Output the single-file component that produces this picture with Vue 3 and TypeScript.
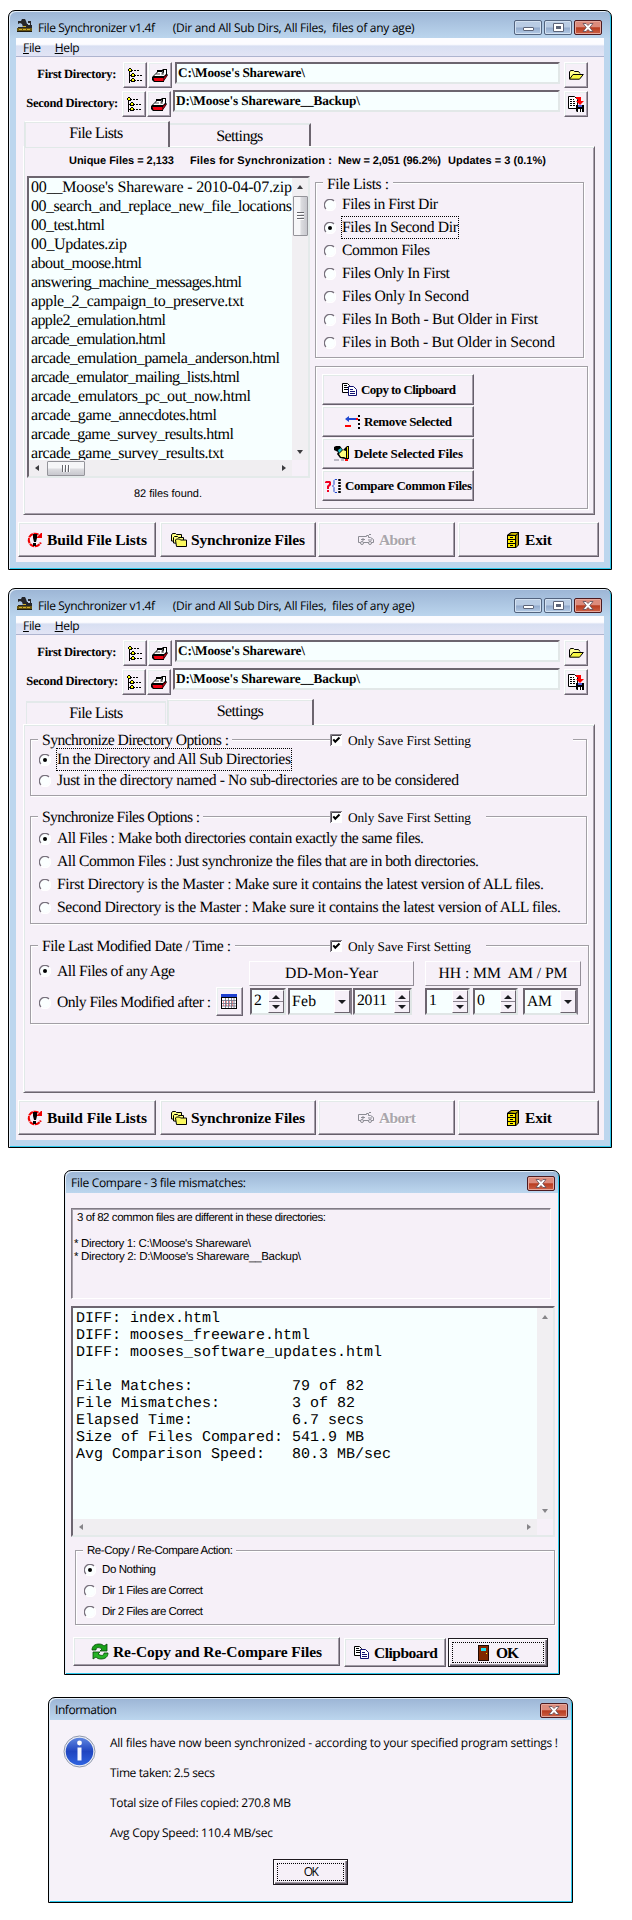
<script setup lang="ts">
import type { Directive } from 'vue'

type Tab = 'lists' | 'settings'
interface Line { text: string; width: number; on?: boolean; focus?: boolean }

/* Tracks a run of text so that it spans the given number of pixels. */
const vFit: Directive<HTMLElement, number> = {
  mounted(el, { value }) {
    const range = document.createRange()
    range.selectNodeContents(el)
    const gaps = (el.textContent ?? '').length - 1
    if (gaps < 1) return
    el.style.letterSpacing = `${((value - range.getBoundingClientRect().width) / gaps).toFixed(3)}px`
  },
}

const windows: Tab[] = ['lists', 'settings']

const stats = [
  { text: 'Unique Files = 2,133', width: 105, cls: 'unique' },
  { text: 'Files for Synchronization :', width: 142, cls: 'sync' },
  { text: 'New = 2,051 (96.2%)', width: 103, cls: 'new' },
  { text: 'Updates = 3 (0.1%)', width: 98, cls: 'updates' },
]

const files: Line[] = [
  { text: "00__Moose's Shareware - 2010-04-07.zip", width: 261 },
  { text: '00_search_and_replace_new_file_locations', width: 261 },
  { text: '00_test.html', width: 74 },
  { text: '00_Updates.zip', width: 96 },
  { text: 'about_moose.html', width: 111 },
  { text: 'answering_machine_messages.html', width: 211 },
  { text: 'apple_2_campaign_to_preserve.txt', width: 213 },
  { text: 'apple2_emulation.html', width: 135 },
  { text: 'arcade_emulation.html', width: 135 },
  { text: 'arcade_emulation_pamela_anderson.html', width: 249 },
  { text: 'arcade_emulator_mailing_lists.html', width: 209 },
  { text: 'arcade_emulators_pc_out_now.html', width: 220 },
  { text: 'arcade_game_annecdotes.html', width: 186 },
  { text: 'arcade_game_survey_results.html', width: 203 },
  { text: 'arcade_game_survey_results.txt', width: 193 },
]

const listChoices: Line[] = [
  { text: 'Files in First Dir', width: 96 },
  { text: 'Files In Second Dir', width: 116, on: true, focus: true },
  { text: 'Common Files', width: 88 },
  { text: 'Files Only In First', width: 108 },
  { text: 'Files Only In Second', width: 127 },
  { text: 'Files In Both - But Older in First', width: 196 },
  { text: 'Files in Both - But Older in Second', width: 213 },
]

const listActions = [
  { icon: 'copy', text: 'Copy to Clipboard', width: 95, cls: 'a-copy' },
  { icon: 'remove', text: 'Remove Selected', width: 88, cls: 'a-remove' },
  { icon: 'delete', text: 'Delete Selected Files', width: 109, cls: 'a-delete' },
  { icon: 'compare', text: 'Compare Common Files', width: 127, cls: 'a-compare' },
]

const mainActions = [
  { icon: 'build', text: 'Build File Lists', width: 100, cls: 'm-build' },
  { icon: 'folders', text: 'Synchronize Files', width: 114, cls: 'm-sync' },
  { icon: 'abort', text: 'Abort', width: 37, cls: 'm-abort' },
  { icon: 'exit', text: 'Exit', width: 27, cls: 'm-exit' },
]

const dirChoices: Line[] = [
  { text: 'In the Directory and All Sub Directories', width: 234, on: true, focus: true },
  { text: 'Just in the directory named - No sub-directories are to be considered', width: 402 },
]

const syncChoices: Line[] = [
  { text: 'All Files : Make both directories contain exactly the same files.', width: 367, on: true },
  { text: 'All Common Files : Just synchronize the files that are in both directories.', width: 422 },
  { text: 'First Directory is the Master : Make sure it contains the latest version of ALL files.', width: 487 },
  { text: 'Second Directory is the Master : Make sure it contains the latest version of ALL files.', width: 504 },
]

const report = `DIFF: index.html
DIFF: mooses_freeware.html
DIFF: mooses_software_updates.html

File Matches:           79 of 82
File Mismatches:        3 of 82
Elapsed Time:           6.7 secs
Size of Files Compared: 541.9 MB
Avg Comparison Speed:   80.3 MB/sec`

const recopyChoices: Line[] = [
  { text: 'Do Nothing', width: 54, on: true },
  { text: 'Dir 1 Files are Correct', width: 101 },
  { text: 'Dir 2 Files are Correct', width: 101 },
]

const infoLines: Line[] = [
  { text: 'All files have now been synchronized - according to your specified program settings !', width: 448 },
  { text: 'Time taken: 2.5 secs', width: 105 },
  { text: 'Total size of Files copied: 270.8 MB', width: 181 },
  { text: 'Avg Copy Speed: 110.4 MB/sec', width: 163 },
]

const treePixels = [
  '.kk............',
  'kYYk...........',
  'kYYkk.kk.kk....',
  '.kkk...........',
  '.k.............',
  '.k..kk.........',
  '.k.kYYk........',
  '.kkkYYkk.kk.kk.',
  '.k.kkkk........',
  '.k.............',
  '.k..kk.........',
  '.k.kYYk........',
  '.kkkYYkk.kk.kk.',
  '.k.kkkk........',
  '.k.............',
]
const treeCells = treePixels.flatMap((row, y) =>
  [...row].map((c, x) => ({ x, y, c })).filter((p) => p.c !== '.'),
)
</script>

<template>
  <div class="page">
    <svg class="defs" width="0" height="0" aria-hidden="true">
      <defs>
        <linearGradient id="blueball" x1="0" y1="0" x2="0" y2="1">
          <stop offset="0" stop-color="#5f86e0" /><stop offset=".5" stop-color="#1f45c0" /><stop offset="1" stop-color="#2f63e0" />
        </linearGradient>
        <symbol id="i-app" viewBox="0 0 16 14">
          <path d="M1 2h3l1-2h3l1 2 1 3h1V2h3v4h1v4H1V8h5L5 5 3 4 1 5z" fill="#26262a" />
          <path d="M11 4h2v2h-2z" fill="#b9c8d8" /><path d="M0 9h15v3l-2 1H3L0 12z" fill="#6a5610" />
          <path d="M2 10h3v1H2zM6 10h3v1H6zM10 10h3v1h-3zM6 7h3v1H6z" fill="#d2b02c" /><path d="M0 12h15v1H0z" fill="#1d1a10" />
        </symbol>
        <symbol id="i-tree" viewBox="0 0 15 15">
          <rect v-for="p in treeCells" :key="`${p.x}-${p.y}`" :x="p.x" :y="p.y" width="1" height="1" :fill="p.c === 'Y' ? '#ffff00' : '#000'" />
        </symbol>
        <symbol id="i-cards" viewBox="0 0 16 13">
          <path d="M0 8L5 3V1h5l1-1h4v5l1 1-4 6v1H2L0 11z" fill="#000" />
          <path d="M2 7l4-4h4l-1 4zM6 2h4l1 1-1 3 2-3V1h2v4l-2 2H9l2-5z" fill="#fff" />
          <path d="M4 5h4M7 2.500h3M11 3v3" stroke="#000" stroke-width=".7" /><path d="M1.500 9h10v3h-9z" fill="#f00010" /><path d="M12 8l3-2v1l-3 4z" fill="#a00010" />
        </symbol>
        <symbol id="i-open" viewBox="0 0 15 10">
          <path d="M.5 9V2l1-1.500h3l1 1h4l1.500 2" fill="#ffff8c" stroke="#000" /><path d="M.5 9.200L4 4.500h10.300L10.500 9.200z" fill="#f6f640" stroke="#000" />
        </symbol>
        <symbol id="i-save" viewBox="0 0 16 16">
          <path d="M.5.500h6l3 3v9h-9z" fill="#fff" stroke="#000" /><path d="M2 3.500h4M2 5.500h5M2 7.500h5M2 9.500h5" stroke="#000" stroke-dasharray="2 1" />
          <path d="M8 1h5v4h3l-4 4-4-4h2V3H8z" fill="#f00" /><path d="M8 9h8v7H9l-1-1z" fill="#000" /><path d="M10 9h4v2h-4z" fill="#5060e0" /><path d="M10 13h4v3h-4z" fill="#fff" /><path d="M12 13h1v3h-1z" fill="#000" />
        </symbol>
        <symbol id="i-copy" viewBox="0 0 15 13">
          <path d="M.5.500h5l2 2v7h-7z" fill="#fff" stroke="#000" /><path d="M2 2.500h3M2 4.500h4M2 6.500h4" stroke="#000" />
          <path d="M6.500 3.500h5l3 3v6h-8z" fill="#fff" stroke="#101070" /><path d="M8 6.500h3M8 8.500h5M8 10.500h5" stroke="#101070" />
        </symbol>
        <symbol id="i-remove" viewBox="0 0 16 14">
          <path d="M0 4l4-3v2h7v2H4v2z" fill="#2048d0" /><path d="M0 10h6v2H0zM11 3h2v2h-2z" fill="#f00" />
          <path d="M13 0h2v2h-2zM13 4h2v2h-2zM13 8h2v2h-2zM13 12h2v2h-2z" fill="#000" />
        </symbol>
        <symbol id="i-delete" viewBox="0 0 16 15">
          <path d="M0 1l2-1h4l3 4 4-4h2v13h-4L6 12 3 8 4 6 0 4z" fill="#000" /><path d="M4 4l3-2 1 2-3 3z" fill="#20c8d0" />
          <path d="M5 8l4-4 3 1v7l-2-1H7z" fill="#ffff80" /><path d="M13 1h1v11h-1z" fill="#f0e000" /><path d="M0 14h5M7 14h3" stroke="#808090" /><path d="M11 13h3v2h-3z" fill="#f00" />
        </symbol>
        <symbol id="i-compare" viewBox="0 0 16 14">
          <path d="M0 4V3l1-1h4l1 1v3L4 8v2H2V7l2-2V4zM2 11h2v2H2z" fill="#f00020" /><path d="M12 .500h-2l-1 1v4L7.500 7 9 8.500v4l1 1h2" fill="none" stroke="#2048d0" />
          <path d="M14.500 0v14" stroke="#000" stroke-width="2.500" stroke-dasharray="2 1" />
        </symbol>
        <symbol id="i-build" viewBox="0 0 16 16">
          <path d="M11.500 2.700A6.300 6.300 0 1 0 13.800 10.500" fill="none" stroke="#f00000" stroke-width="2" stroke-dasharray="5 .7" /><path d="M10 6V5l4-4h1v5z" fill="#f00000" />
          <path d="M6 2h4v4L9 10H7L6 6zM6 11h3v3H6z" fill="#000" />
        </symbol>
        <symbol id="i-folders" viewBox="0 0 16 14">
          <path d="M.5 8V2l1-1.500h3l1 1h5v7z" fill="#ffff80" stroke="#000" /><path d="M2.500 10V4.500l1-1h3l1 1h5v6z" fill="#ffff80" stroke="#000" />
          <path d="M5.500 13.500L4.500 7l1-1h3l1 1h6v6.500z" fill="#fbf860" stroke="#000" />
        </symbol>
        <symbol id="i-abort" viewBox="0 0 16 11">
          <path d="M.5 2.500h8v-1h2v2h2l3 2v3h-2M.5 2.500v6h2M5.500 8.500h5" fill="none" stroke="#8c8c94" /><path d="M3 5.500h4M5 4v3M11 .500h2M10 6h4" stroke="#8c8c94" />
          <circle cx="4" cy="9" r="1.500" fill="none" stroke="#8c8c94" /><circle cx="12" cy="9" r="1.500" fill="none" stroke="#8c8c94" />
        </symbol>
        <symbol id="i-exit" viewBox="0 0 12 16">
          <path d="M0 3l4-3h8v13l-3 3H0z" fill="#000" /><path d="M1 4h7v11H1z" fill="#ffee00" /><path d="M2 2.500L4.500 1H11L8.500 3z" fill="#c8b400" /><path d="M9 4l2-2v11l-2 2z" fill="#a89000" />
          <path d="M1 7.500h7M1 11.500h7M3 5.500h3M3 9.500h3M3 13.500h3" stroke="#000" />
        </symbol>
        <symbol id="i-calendar" viewBox="0 0 17 15">
          <path d="M0 0h16v15H0z" fill="#000" /><path d="M0 0h16v3H0z" fill="#2040d0" /><path d="M1 4h14v10H1z" fill="#fff" />
          <path d="M1 6.500h14M1 9.500h14M1 12h14M4.500 4v10M7.500 4v10M10.500 4v10M13 4v10" stroke="#68687c" stroke-width=".8" />
          <path d="M2 8h12M2 11h12" stroke="#e02030" stroke-dasharray="1 2" />
        </symbol>
        <symbol id="i-recopy" viewBox="0 0 18 17">
          <path d="M1 7c0-4 3-6 7-6 3 0 4 1 5 2l3-2v7H9l2-2C8 4 5 4 5 7z" fill="#18a018" stroke="#044804" stroke-width=".8" />
          <path d="M17 10c0 4-3 6-7 6-3 0-4-1-5-2l-3 2V9h7l-2 2c3 2 6 2 6-1z" fill="#28b428" stroke="#044804" stroke-width=".8" />
        </symbol>
        <symbol id="i-door" viewBox="0 0 11 16">
          <path d="M0 0h11v16H0z" fill="#200800" /><path d="M1 1h9v14H1z" fill="#802800" /><path d="M3 3h5v3H3z" fill="#20e0f0" /><path d="M8 8h1v1H8z" fill="#ffe000" />
        </symbol>
        <symbol id="i-off" viewBox="0 0 12 12">
          <circle cx="6" cy="6" r="5" fill="#fbffff" /><path d="M2 10A5.500 5.500 0 0 1 10 2" fill="none" stroke="#77717c" stroke-width="1.300" />
          <path d="M10 2A5.500 5.500 0 0 1 2 10" fill="none" stroke="#fff" stroke-width="1.300" />
        </symbol>
        <symbol id="i-check" viewBox="0 0 12 12">
          <path d="M0 0h12v12H0z" fill="#fff" /><path d="M.5 12V.500H12" fill="none" stroke="#88828c" /><path d="M1.500 11V1.500H11" fill="none" stroke="#4c4850" />
          <path d="M3.300 5.300l2 2.400 4.200-4.200" fill="none" stroke="#000" stroke-width="2" />
        </symbol>
      </defs>
    </svg>

    <section v-for="tab in windows" :key="tab" class="window main" :class="tab">
      <header class="title">
        <svg class="app-icon"><use href="#i-app" /></svg>
        <span v-fit="117" class="name">File Synchronizer v1.4f</span>
        <span v-fit="242" class="scope">(Dir and All Sub Dirs, All Files,&nbsp; files of any age)</span>
        <div class="caption">
          <i class="cap"><b class="min" /></i>
          <i class="cap"><b class="max" /></i>
          <i class="cap close"><svg viewBox="0 0 12 9"><path d="M1 .500h3l2 2 2-2h3l-3.200 4 3.200 4H8l-2-2-2 2H1l3.200-4z" fill="#fff" stroke="#5a4a55" stroke-width=".8" /></svg></i>
        </div>
      </header>
      <div class="client">
        <nav class="menu"><span v-fit="18"><u>F</u>ile</span><span v-fit="25"><u>H</u>elp</span></nav>
        <div class="dir first">
          <label><span v-fit="79">First Directory:</span></label>
          <button class="tool"><svg class="s15"><use href="#i-tree" /></svg></button>
          <button class="tool"><svg class="s-cards"><use href="#i-cards" /></svg></button>
          <div class="path"><span v-fit="127">C:\Moose's Shareware\</span></div>
          <button class="tool"><svg class="s-open"><use href="#i-open" /></svg></button>
        </div>
        <div class="dir second">
          <label><span v-fit="92">Second Directory:</span></label>
          <button class="tool"><svg class="s15"><use href="#i-tree" /></svg></button>
          <button class="tool"><svg class="s-cards"><use href="#i-cards" /></svg></button>
          <div class="path"><span v-fit="184">D:\Moose's Shareware__Backup\</span></div>
          <button class="tool"><svg class="s16"><use href="#i-save" /></svg></button>
        </div>

        <div class="tabs">
          <div class="tab" :class="{ active: tab === 'lists' }"><span v-fit="54">File Lists</span></div>
          <div class="tab" :class="{ active: tab === 'settings' }"><span v-fit="47">Settings</span></div>
        </div>

        <div v-if="tab === 'lists'" class="panel">
          <div class="stats"><span v-for="s in stats" :key="s.cls" v-fit="s.width" :class="s.cls">{{ s.text }}</span></div>
          <div class="columns">
            <div class="left">
              <div class="listbox">
                <div class="rows"><div v-for="f in files" :key="f.text" class="row"><span v-fit="f.width">{{ f.text }}</span></div></div>
                <div class="vbar"><i class="arrow up" /><i class="thumb"><b /><b /><b /></i><i class="arrow down" /></div>
                <div class="hbar"><i class="arrow lt" /><i class="thumb"><b /><b /><b /></i><i class="arrow rt" /></div>
              </div>
              <p class="found"><span v-fit="68">82 files found.</span></p>
            </div>
            <div class="right">
              <div class="group choices">
                <div class="legend"><span v-fit="62" class="cap-text">File Lists :</span></div>
                <div v-for="c in listChoices" :key="c.text" class="radio">
                  <svg class="dot"><use href="#i-off" /><circle v-if="c.on" cx="6" cy="6" r="2" /></svg>
                  <span v-fit="c.width" :class="{ focus: c.focus }">{{ c.text }}</span>
                </div>
              </div>
              <div class="group actions">
                <button v-for="a in listActions" :key="a.icon" class="push" :class="a.cls">
                  <svg :class="'s-' + a.icon"><use :href="'#i-' + a.icon" /></svg><span v-fit="a.width">{{ a.text }}</span>
                </button>
              </div>
            </div>
          </div>
        </div>

        <div v-else class="panel">
          <div class="group g1">
            <div class="legend">
              <span v-fit="187" class="cap-text">Synchronize Directory Options :</span>
              <div class="only wide"><svg class="dot"><use href="#i-check" /></svg><span v-fit="123">Only Save First Setting</span></div>
            </div>
            <div v-for="c in dirChoices" :key="c.text" class="radio">
              <svg class="dot"><use href="#i-off" /><circle v-if="c.on" cx="6" cy="6" r="2" /></svg>
              <span v-fit="c.width" :class="{ focus: c.focus }">{{ c.text }}</span>
            </div>
          </div>
          <div class="group g2">
            <div class="legend">
              <span v-fit="158" class="cap-text">Synchronize Files Options :</span>
              <div class="only"><svg class="dot"><use href="#i-check" /></svg><span v-fit="123">Only Save First Setting</span></div>
            </div>
            <div v-for="c in syncChoices" :key="c.text" class="radio">
              <svg class="dot"><use href="#i-off" /><circle v-if="c.on" cx="6" cy="6" r="2" /></svg>
              <span v-fit="c.width">{{ c.text }}</span>
            </div>
          </div>
          <div class="group g3">
            <div class="legend">
              <span v-fit="189" class="cap-text">File Last Modified Date / Time :</span>
              <div class="only"><svg class="dot"><use href="#i-check" /></svg><span v-fit="123">Only Save First Setting</span></div>
            </div>
            <div class="when heads">
              <div class="radio"><svg class="dot"><use href="#i-off" /><circle cx="6" cy="6" r="2" /></svg><span v-fit="118">All Files of any Age</span></div>
              <div class="head date"><span v-fit="93">DD-Mon-Year</span></div>
              <div class="head time"><span v-fit="129">HH : MM&nbsp; AM / PM</span></div>
            </div>
            <div class="when fields">
              <div class="radio"><svg class="dot"><use href="#i-off" /></svg><span v-fit="154">Only Files Modified after :</span></div>
              <button class="tool cal"><svg><use href="#i-calendar" /></svg></button>
              <div class="field day"><span>2</span><div class="spin"><i class="arrow up" /><i class="arrow down" /></div></div>
              <div class="field month"><span v-fit="24">Feb</span><div class="drop"><i class="arrow down" /></div></div>
              <div class="field year"><span v-fit="30">2011</span><div class="spin"><i class="arrow up" /><i class="arrow down" /></div></div>
              <div class="field hour"><span>1</span><div class="spin"><i class="arrow up" /><i class="arrow down" /></div></div>
              <div class="field minute"><span>0</span><div class="spin"><i class="arrow up" /><i class="arrow down" /></div></div>
              <div class="field ampm"><span v-fit="25">AM</span><div class="drop"><i class="arrow down" /></div></div>
            </div>
          </div>
        </div>

        <div class="bottom">
          <button v-for="a in mainActions" :key="a.icon" class="push big" :class="a.cls">
            <svg :class="'s-' + a.icon"><use :href="'#i-' + a.icon" /></svg><span v-fit="a.width">{{ a.text }}</span>
          </button>
        </div>
      </div>
    </section>

    <section class="window compare">
      <header class="title">
        <span v-fit="175" class="name">File Compare - 3 file mismatches:</span>
        <div class="caption"><i class="cap close"><svg viewBox="0 0 12 9"><path d="M1 .500h3l2 2 2-2h3l-3.200 4 3.200 4H8l-2-2-2 2H1l3.200-4z" fill="#fff" stroke="#5a4a55" stroke-width=".8" /></svg></i></div>
      </header>
      <div class="summary">
        <div class="s-head"><span v-fit="249">3 of 82 common files are different in these directories:</span></div>
        <div class="s-dir"><span v-fit="177">* Directory 1: C:\Moose's Shareware\</span></div>
        <div class="s-dir"><span v-fit="227">* Directory 2: D:\Moose's Shareware__Backup\</span></div>
      </div>
      <div class="listbox report">
        <pre class="rows">{{ report }}</pre>
        <div class="vbar"><i class="arrow up" /><i class="arrow down" /></div>
        <div class="hbar"><i class="arrow lt" /><i class="arrow rt" /></div>
      </div>
      <div class="group recopy">
        <div class="legend"><span v-fit="146" class="cap-text">Re-Copy / Re-Compare Action:</span></div>
        <div v-for="c in recopyChoices" :key="c.text" class="radio">
          <svg class="dot"><use href="#i-off" /><circle v-if="c.on" cx="6" cy="6" r="2" /></svg>
          <span v-fit="c.width">{{ c.text }}</span>
        </div>
      </div>
      <div class="dialog-buttons">
        <button class="push big b-recopy"><svg class="s-recopy"><use href="#i-recopy" /></svg><span v-fit="209">Re-Copy and Re-Compare Files</span></button>
        <button class="push big b-clip"><svg class="s-copy"><use href="#i-copy" /></svg><span v-fit="64">Clipboard</span></button>
        <button class="push big b-ok default"><div class="inner"><svg class="s-door"><use href="#i-door" /></svg><span v-fit="23">OK</span></div></button>
      </div>
    </section>

    <section class="window info">
      <header class="title">
        <span v-fit="62" class="name">Information</span>
        <div class="caption"><i class="cap close"><svg viewBox="0 0 12 9"><path d="M1 .500h3l2 2 2-2h3l-3.200 4 3.200 4H8l-2-2-2 2H1l3.200-4z" fill="#fff" stroke="#5a4a55" stroke-width=".8" /></svg></i></div>
      </header>
      <div class="info-body">
        <svg class="ball" viewBox="0 0 33 33">
          <circle cx="16.500" cy="16.500" r="15.500" fill="#eef0f6" stroke="#8f98ac" /><circle cx="16.500" cy="16.500" r="13.800" fill="url(#blueball)" />
          <circle cx="16.500" cy="8" r="2.400" fill="#fff" /><path d="M14.500 12.500h4v13h-4z" fill="#f4f6ff" />
        </svg>
        <div class="info-text"><p v-for="l in infoLines" :key="l.text"><span v-fit="l.width">{{ l.text }}</span></p></div>
      </div>
      <button class="push default info-ok"><div class="inner"><span v-fit="15">OK</span></div></button>
    </section>
  </div>
</template>

<style>
body { background: #fff; }
</style>

<style scoped>
.page { width: 632px; height: 1920px; padding-top: 10px; box-sizing: border-box; overflow: hidden; background: #fff; color: #000; font: 16px "Liberation Serif", serif; text-rendering: geometricPrecision; white-space: nowrap; }
.page * { box-sizing: border-box; }
.defs { position: absolute; }
svg { display: block; flex: none; }
i, b { font-style: normal; display: block; }
p { margin: 0; }
button { font: inherit; color: inherit; padding: 0; margin: 0; border: 0; border-radius: 0; }
span { flex: none; }

.window { border: 1px solid #000; border-radius: 7px 7px 0 0; background: #f6f0f8; box-shadow: inset 1px 1px #e4effa, inset -1px -1px #2cc8ec; }
.main { width: 604px; height: 560px; margin: 0 0 18px 8px; padding: 0 7px 7px; background: linear-gradient(#9cb5d5, #bcd6ee 28px); }
.title { height: 27px; display: flex; align-items: center; font: 12px/16px "Open Sans", sans-serif; color: #000; }
.main .title { padding: 0 2px 0 1px; }
.app-icon { width: 16px; height: 14px; margin-top: 3px; }
.main .name { margin: 7px 0 0 5px; }
.main .scope { margin: 7px 0 0 18px; }
.caption { display: flex; gap: 2px; margin-left: auto; margin-top: 6px; }
.cap { width: 28px; height: 15px; border: 1px solid #53647f; border-radius: 2px; box-shadow: inset 0 0 0 1px #d3e1f1; background: linear-gradient(#b9cce4 48%, #91a9cb 52%, #b4cbe6); display: grid; place-items: center; }
.cap .min { width: 11px; height: 4px; margin-top: 3px; background: #fff; border: 1px solid #5c6478; border-radius: 1px; }
.cap .max { width: 11px; height: 9px; background: #5c6478; border: 1px solid #5c6478; border-radius: 1px; box-shadow: inset 0 0 0 2px #fff; }
.cap.close { border-color: #4c1a20; box-shadow: inset 0 0 0 1px #e6a89c; background: linear-gradient(#dc8b7c 45%, #b83c20 52%, #cc6248); }
.cap.close svg { width: 12px; height: 9px; }

.client { height: 524px; background: #f6f0f8; }
.menu { height: 19px; display: flex; gap: 14px; padding-left: 7px; border-bottom: 1px solid #aeb4cf; background: linear-gradient(#fcfcff 0 35%, #d8dff2 45%, #e2e4f5); font: 12px/20px "Open Sans", sans-serif; }
.menu u { text-underline-offset: 1px; }
.dir { display: flex; align-items: flex-start; font-weight: 700; font-size: 12.500px; }
.dir label { width: 100px; line-height: 25px; text-align: right; margin-right: 7px; display: flex; justify-content: flex-end; }
.first { margin-top: 5px; height: 29px; }
.second { height: 26px; }
.second label { width: 102px; margin-right: 4px; }
.tool { width: 24px; height: 26px; margin-right: 1px; flex: none; display: grid; place-items: center; background: #f6f0f8; border: 1px solid; border-color: #fff #6b6470 #6b6470 #fff; box-shadow: inset -1px -1px #a79fac, inset 1px 1px #e8efee; }
.s15 { width: 15px; height: 15px; }
.s16 { width: 16px; height: 16px; }
.s-cards { width: 16px; height: 13px; }
.s-open { width: 15px; height: 10px; }
.path { height: 22px; width: 385px; margin: 0 4px 0 2px; padding-left: 1px; line-height: 18px; font-size: 13.300px; background: #f7ffff; border: 2px solid; border-color: #6c656f #e2e8e8 #e2e8e8 #6c656f; }
.second .path { width: 387px; margin-top: -1px; margin-left: 1px; }

.tabs { display: flex; height: 25px; margin: 4px 0 0 8px; }
.tab { margin-top: 2px; height: 23px; border: 1px solid; border-width: 2px 0 0; border-color: #e3e9ea; display: flex; justify-content: center; line-height: 22px; }
.tab.active { margin-top: 0; height: 26px; border-width: 1px 2px 0 1px; border-color: #fff #6c656f #fff #e0e8e8; background: #f6f0f8; z-index: 1; box-shadow: inset 1px 1px #e3eae8; }
.lists .tab:first-child { width: 146px; }
.lists .tab:last-child { width: 141px; border-right: 2px solid #6c656f; line-height: 24px; }
.lists .tab:first-child { line-height: 24px; padding-right: 1px; }
.settings .tab:first-child { width: 140px; margin-left: 2px; border-left: 1px solid #e3e9ea; border-right: 1px solid #e3e9ea; }
.settings .tab:last-child { width: 147px; margin-left: 1px; line-height: 24px; }

.panel { width: 572px; height: 369px; margin-left: 7px; border: 1px solid; border-color: #fff #6c656f #6c656f #fff; box-shadow: inset 1px 1px #e1e9e8, inset -1px -1px #a8a0ac; }
.stats { display: flex; margin-top: 4px; padding-left: 45px; height: 25px; font: 700 11px/20px "Liberation Sans", sans-serif; }
.stats .unique { width: 121px; }
.stats .sync { width: 148px; }
.stats .new { width: 110px; }
.columns { display: flex; padding-left: 3px; }
.left { width: 283px; }
.right { padding: 6px 0 0 5px; }
.listbox { height: 302px; display: grid; grid-template: minmax(0, 1fr) 16px / minmax(0, 1fr) 16px; border: 2px solid; border-color: #6c656f #e4eaea #e4eaea #6c656f; background: #f6f0f8; }
.rows { overflow: hidden; padding-left: 2px; margin: 0; background: #f7ffff; }
.row { height: 19px; line-height: 20px; }
.vbar { background: #f1eff2; display: flex; flex-direction: column; align-items: center; padding: 7px 0 6px; }
.hbar { grid-column: 1; background: #f0eef1; display: flex; align-items: center; padding: 0 6px; }
.arrow { border: 4px solid transparent; width: 0; height: 0; flex: none; }
.arrow.up { border-bottom-color: #1c1c20; border-top: 0; }
.arrow.down { border-top-color: #1c1c20; border-bottom: 0; margin-top: auto; }
.arrow.lt { border-right-color: #1c1c20; border-left: 0; }
.arrow.rt { border-left-color: #1c1c20; border-right: 0; margin-left: auto; }
.vbar > .arrow { border-left-width: 3px; border-right-width: 3px; opacity: .85; }
.hbar > .arrow { border-top-width: 3px; border-bottom-width: 3px; opacity: .85; }
.thumb { border: 1px solid #94949a; border-radius: 1px; display: flex; align-items: center; justify-content: center; gap: 1px; }
.vbar .thumb { width: 15px; height: 40px; margin-top: 7px; flex-direction: column; background: linear-gradient(90deg, #f6f6f8 45%, #dcdce0 55%, #c8c8ce); }
.hbar .thumb { width: 38px; height: 15px; margin-left: 8px; background: linear-gradient(#f6f6f8 45%, #dcdce0 55%, #c8c8ce); }
.vbar .thumb b { width: 7px; height: 2px; background: #66666c; border-bottom: 1px solid #fff; }
.hbar .thumb b { width: 2px; height: 7px; background: #66666c; border-right: 1px solid #fff; }
.found { padding: 10px 0 0 107px; font: 11px/13px "Liberation Sans", sans-serif; }

.group { border: 1px solid #a29fa5; box-shadow: 1px 1px #fff, inset 1px 1px #fff; font-size: 15.700px; }
.legend { display: flex; height: 18px; line-height: 19px; margin: -8px 0 0 7px; }
.cap-text { background: #f6f0f8; padding: 0 4px; height: 18px; }
.radio { display: flex; align-items: center; height: 23px; line-height: 20px; padding-left: 8px; }
.radio span { line-height: 21px; }
.dot { width: 12px; height: 12px; margin-right: 6px; }
.focus { outline: 1px dotted #000; }
.choices { width: 269px; height: 176px; }
.actions { width: 273px; height: 143px; margin-top: 8px; padding: 7px 6px; display: flex; flex-direction: column; gap: 1px; }
.push { display: flex; align-items: center; background: #f6f0f8; border: 1px solid; border-color: #fff #655e6a #655e6a #fff; box-shadow: inset -1px -1px #a29ba6, inset 1px 1px #e2eae8; font-weight: 700; flex: none; }
.actions .push { width: 152px; height: 31px; font-size: 13px; line-height: 18px; }
.s-copy { width: 15px; height: 13px; }
.s-remove { width: 16px; height: 14px; }
.s-delete { width: 16px; height: 15px; }
.s-compare { width: 16px; height: 14px; }
.a-copy { padding-left: 19px; } .a-copy span { margin-left: 4px; }
.a-remove { padding-left: 22px; } .a-remove span { margin-left: 3px; }
.a-delete { padding-left: 11px; } .a-delete span { margin-left: 4px; }
.a-compare { padding-left: 2px; } .a-compare span { margin-left: 4px; }

.bottom { display: flex; margin: 7px 0 0 2px; }
.big { height: 35px; font-size: 15.500px; line-height: 20px; }
.m-build { width: 138px; margin-right: 4px; padding-left: 8px; } .m-build span { margin-left: 4px; }
.m-sync { width: 156px; margin-right: 2px; padding-left: 10px; } .m-sync span { margin-left: 4px; }
.m-abort { width: 137px; margin-right: 3px; padding-left: 39px; color: #aaa6ac; } .m-abort span { margin-left: 5px; text-shadow: 1px 1px #fff; }
.m-exit { width: 141px; padding-left: 48px; } .m-exit span { margin-left: 6px; }
.s-build { width: 16px; height: 16px; }
.s-folders { width: 16px; height: 14px; }
.s-abort { width: 16px; height: 11px; }
.s-exit { width: 12px; height: 16px; }

.settings .group { width: 557px; margin-left: 6px; }
.settings .legend { margin-top: -9px; }
.only { display: flex; align-items: center; width: 156px; background: #f6f0f8; font-size: 13.300px; margin-right: 100px; margin-left: auto; }
.only.wide { width: 243px; margin-right: 13px; }
.g1 { margin-top: 14px; height: 57px; }
.g1 .radio { height: 21px; }
.g2 { margin-top: 20px; height: 108px; }
.g2 .legend { margin-bottom: 1px; }
.settings .g3 { margin-top: 21px; height: 79px; width: 559px; }
.g3 .only { margin-right: 102px; }
.when { display: flex; }
.heads { margin-top: 6px; height: 26px; }
.heads .radio { width: 218px; height: 20px; }
.head { height: 25px; border: 1px solid; border-color: #fff #938d97 #938d97 #fff; display: flex; justify-content: center; line-height: 24px; }
.date { width: 165px; margin-right: 11px; }
.time { width: 156px; }
.fields .radio { width: 185px; height: 31px; }
.fields .cal { width: 27px; height: 29px; margin-right: 7px; }
.cal svg { width: 17px; height: 15px; }
.field { height: 27px; margin-top: 1px; padding-left: 2px; display: flex; line-height: 21px; background: #f7ffff; border: 2px solid; border-color: #6c656f #e0e6e6 #e0e6e6 #6c656f; }
.month, .ampm { border-right-color: #817a86; line-height: 24px; }
.day { width: 36px; margin-right: 2px; }
.month { width: 64px; margin-right: 1px; }
.year { width: 59px; margin-right: 13px; }
.hour { width: 45px; margin-right: 3px; }
.minute { width: 45px; margin-right: 5px; }
.ampm { width: 55px; }
.spin, .drop { width: 16px; height: 23px; margin-left: auto; background: #f6f0f8; border: 1px solid; border-color: #fff #6c656f #6c656f #fff; display: flex; flex-direction: column; align-items: center; justify-content: center; }
.spin { background: linear-gradient(#f6f0f8 10px, #8a838e 10px, #8a838e 11px, #f6f0f8 11px); gap: 6px; }
.spin .arrow, .drop .arrow { margin: 0; }

.compare { width: 496px; height: 505px; margin: 22px 0 22px 64px; padding: 0 4px 0 6px; background: linear-gradient(#9cb5d5, #bcd6ee 22px, #f6f0f8 22px); }
.compare .title { height: 22px; }
.compare .name { margin-top: 2px; }
.info .name { margin-top: 1px; }
.compare .caption, .info .caption { margin-top: 2px; }
.summary { width: 480px; height: 91px; margin-top: 15px; padding: 3px 0 0 2px; font: 11.500px/13px "Liberation Sans", sans-serif; border: 1px solid; border-color: #817b85 #fff #fff #817b85; box-shadow: inset 1px 1px #a8a2ac; }
.s-head { padding-left: 3px; margin-bottom: 13px; }
.report { width: 484px; height: 231px; margin-top: 7px; }
.report .rows { padding: 2px 0 0 3px; font: 15px/17px "Liberation Mono", monospace; }
.report .arrow { opacity: .5; }
.recopy { width: 480px; height: 75px; margin: 13px 0 0 4px; font: 11.500px/16px "Liberation Sans", sans-serif; }
.recopy .legend { line-height: 16px; height: 16px; margin-left: 7px; }
.recopy .cap-text { padding: 0 3px 0 4px; height: 16px; }
.recopy .radio { height: 21px; }
.recopy .radio span { line-height: 16px; }
.dialog-buttons { display: flex; margin: 12px 0 0 2px; }
.b-recopy { width: 267px; height: 29px; padding-left: 17px; margin-right: 4px; } .b-recopy span { margin-left: 4px; }
.b-clip { width: 102px; height: 29px; margin: 1px 2px 0 0; padding-left: 9px; } .b-clip span { margin-left: 5px; }
.s-recopy { width: 18px; height: 17px; }
.s-door { width: 11px; height: 16px; }
.default { border: 1px solid #1e1a20; box-shadow: inset 1px 1px #fff, inset -1px -1px #655e6a, inset -2px -2px #a29ba6; padding: 3px; font-weight: 700; }
.inner { width: 100%; height: 100%; border: 1px dotted #000; display: flex; align-items: center; justify-content: center; }
.b-ok { width: 100px; height: 29px; margin-top: 1px; }
.b-ok .inner { gap: 7px; }

.info { width: 525px; height: 206px; margin-left: 48px; padding: 0 4px 0 6px; background: linear-gradient(#9cb5d5, #bcd6ee 22px, #f6f2f9 22px); }
.info .title { height: 22px; }
.info-body { display: flex; height: 128px; padding: 15px 0 0 8px; font: 12px/30px "Open Sans", sans-serif; }
.ball { width: 33px; height: 33px; }
.info-text { margin: -7px 0 0 14px; }
.info-ok { width: 75px; height: 26px; margin: 11px 0 0 218px; font: 12px/16px "Open Sans", sans-serif; }
</style>
